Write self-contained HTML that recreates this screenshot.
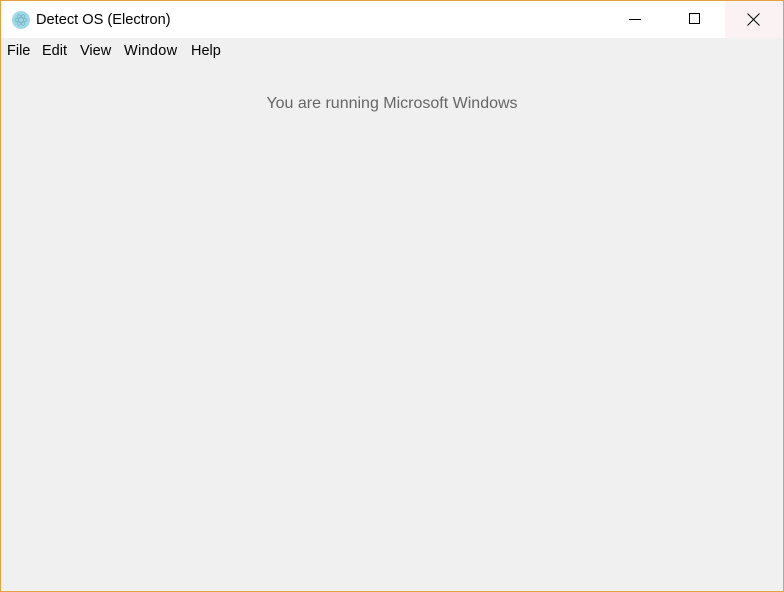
<!DOCTYPE html>
<html><head><style>
body{margin:0;width:784px;height:592px;overflow:hidden;font-family:"Liberation Sans",sans-serif}
.win{position:absolute;left:0;top:0;width:782px;height:590px;border:1px solid #e3a13f;background:#f0f0f0}
.title{position:absolute;left:0;top:0;width:782px;height:37px;background:#fff}
.icon{position:absolute;left:11px;top:10px;width:18px;height:18px;border-radius:50%;background:#9fd9e6}
.tt{position:absolute;left:35px;top:11px;font-size:14.6px;color:#000}
.close{position:absolute;left:724px;top:0;width:58px;height:37px;background:#fbf3f3}
.menu{position:absolute;top:42px;font-size:14.5px;color:#000}
.msg{position:absolute;left:0;width:782px;top:94px;text-align:center;font-size:16px;color:#666}
</style></head><body><div class="win">
<div class="title"><div class="icon"><svg width="18" height="18" viewBox="0 0 18 18"><g fill="none" stroke="#7ab5c4" stroke-width=".8"><ellipse cx="9" cy="9" rx="6" ry="2.3"/><ellipse cx="9" cy="9" rx="6" ry="2.3" transform="rotate(60 9 9)"/><ellipse cx="9" cy="9" rx="6" ry="2.3" transform="rotate(-60 9 9)"/></g></svg></div>
<div class="tt">Detect OS (Electron)</div>
<svg style="position:absolute;left:628px;top:18px" width="12" height="2"><rect width="12" height="1" fill="#000"/></svg>
<svg style="position:absolute;left:688px;top:12px" width="12" height="12"><rect x=".5" y=".5" width="10" height="10" fill="none" stroke="#000"/></svg>
<div class="close"><svg style="position:absolute;left:22px;top:12px" width="13" height="13"><path d="M0.5 0.5L12.5 12.5M12.5 0.5L0.5 12.5" stroke="#000" stroke-width="1"/></svg></div>
</div>
<span class="menu" style="left:6px">File</span><span class="menu" style="left:41px">Edit</span><span class="menu" style="left:79px">View</span><span class="menu" style="left:123px;letter-spacing:.3px">Window</span><span class="menu" style="left:190px">Help</span>
<div class="msg">You are running Microsoft Windows</div>
</div></body></html>
